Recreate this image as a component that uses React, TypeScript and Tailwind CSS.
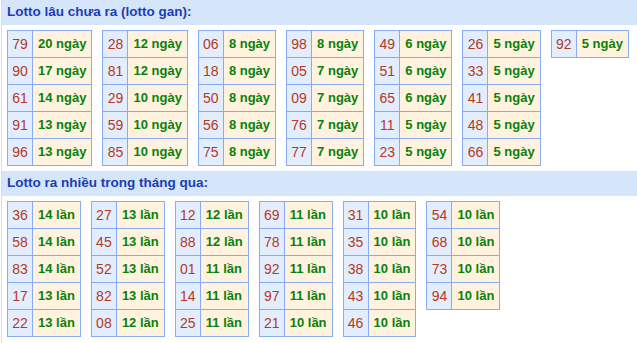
import React from 'react';

type Item = [string, string];

const gan: Item[][] = [
    [['79', '20'], ['90', '17'], ['61', '14'], ['91', '13'], ['96', '13']],
    [['28', '12'], ['81', '12'], ['29', '10'], ['59', '10'], ['85', '10']],
    [['06', '8'], ['18', '8'], ['50', '8'], ['56', '8'], ['75', '8']],
    [['98', '8'], ['05', '7'], ['09', '7'], ['76', '7'], ['77', '7']],
    [['49', '6'], ['51', '6'], ['65', '6'], ['11', '5'], ['23', '5']],
    [['26', '5'], ['33', '5'], ['41', '5'], ['48', '5'], ['66', '5']],
    [['92', '5']],
];

const nhieu: Item[][] = [
    [['36', '14'], ['58', '14'], ['83', '14'], ['17', '13'], ['22', '13']],
    [['27', '13'], ['45', '13'], ['52', '13'], ['82', '13'], ['08', '12']],
    [['12', '12'], ['88', '12'], ['01', '11'], ['14', '11'], ['25', '11']],
    [['69', '11'], ['78', '11'], ['92', '11'], ['97', '11'], ['21', '10']],
    [['31', '10'], ['35', '10'], ['38', '10'], ['43', '10'], ['46', '10']],
    [['54', '10'], ['68', '10'], ['73', '10'], ['94', '10']],
];

const LottoTable = ({ rows, unit }: { rows: Item[]; unit: string }) => (
    <table className="border-collapse shrink-0">
        <tbody>
            {rows.map(([num, count], i) => (
                <tr key={i} className="h-[27px]">
                    <td className="w-[25px] p-0 border border-[#88acee] bg-[#e2eefd] text-center text-[14px] text-[#b5391c]">{num}</td>
                    <td className="border border-[#88acee] bg-[#fff3e0] px-[5px] font-bold text-[#0a800a] whitespace-nowrap">{count} {unit}</td>
                </tr>
            ))}
        </tbody>
    </table>
);

const Section = ({ title, tables, unit }: { title: string; tables: Item[][]; unit: string }) => (
    <div className="flex flex-col">
        <div className="h-[25px] flex items-center pl-[5px] bg-[#d5e6fa] font-bold text-[13.5px] text-[#1c3db4]">{title}</div>
        <div className="flex items-start gap-[10px] pl-[5px] pt-[5px]">
            {tables.map((t, i) => (
                <LottoTable key={i} rows={t} unit={unit} />
            ))}
        </div>
    </div>
);

export default function App() {
    return (
        <div className="w-[637px] h-[343px] overflow-hidden bg-white" style={{ fontFamily: '"Liberation Sans", Arial, sans-serif' }}>
            <div className="ml-px h-full border-l border-[#dcdcdc] text-[13px] flex flex-col gap-[5px]">
                <Section title="Lotto lâu chưa ra (lotto gan):" tables={gan} unit="ngày" />
                <Section title="Lotto ra nhiều trong tháng qua:" tables={nhieu} unit="lần" />
            </div>
        </div>
    );
}
